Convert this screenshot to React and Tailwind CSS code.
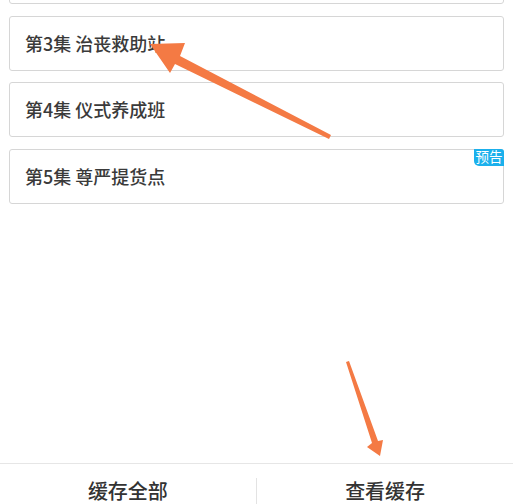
import React from 'react'

const episodes = [
  { id: 2, title: '' },
  { id: 3, title: '第3集 治丧救助站' },
  { id: 4, title: '第4集 仪式养成班' },
  { id: 5, title: '第5集 尊严提货点', badge: '预告' },
]

const font = { fontFamily: '"Noto Sans CJK SC", "Noto Sans", sans-serif' }

function EpisodeCard({ ep, first }) {
  return (
    <div
      className={`relative flex h-[55px] items-center rounded-[3px] border border-[#d6d6d6] bg-white pl-[15px] ${
        first ? '-mt-[51px]' : ''
      }`}
    >
      <span className="text-[18px] font-medium text-[#3a3a3a]">{ep.title}</span>
      {ep.badge && (
        <span className="absolute -right-px -top-px flex h-[17px] w-[30px] items-center justify-center rounded-tr-[3px] rounded-bl-[5px] bg-[#1bb0ec] text-[13.5px] leading-none text-white">
          {ep.badge}
        </span>
      )}
    </div>
  )
}

export default function App() {
  return (
    <div className="relative h-[504px] w-[513px] overflow-hidden bg-white" style={font}>
      <div className="flex h-[463px] flex-col gap-[11.5px] px-[9px]">
        {episodes.map((ep, i) => (
          <EpisodeCard key={ep.id} ep={ep} first={i === 0} />
        ))}
      </div>

      <div className="flex h-[41px] items-start border-t-[1.5px] border-[#e6e6e6] bg-white pt-[17px]">
        <button className="flex-1 text-[20px] font-medium leading-[20px] text-[#333333]">缓存全部</button>
        <div className="mt-[-3px] h-[30px] w-[1.5px] bg-[#e3e3e3]" />
        <button className="flex-1 text-[20px] font-medium leading-[20px] text-[#333333]">查看缓存</button>
      </div>

      {/* annotation arrows drawn over the screenshot */}
      <svg className="pointer-events-none absolute left-0 top-0" width="513" height="504">
        <polygon
          points="329,139 331,135 180,56 185,43 150,44 170,73 175,64"
          fill="#f47a44"
        />
        <polygon points="346,362 349,361 378,441 383,440 380,456 367,447 372,443" fill="#f47a44" />
      </svg>
    </div>
  )
}
